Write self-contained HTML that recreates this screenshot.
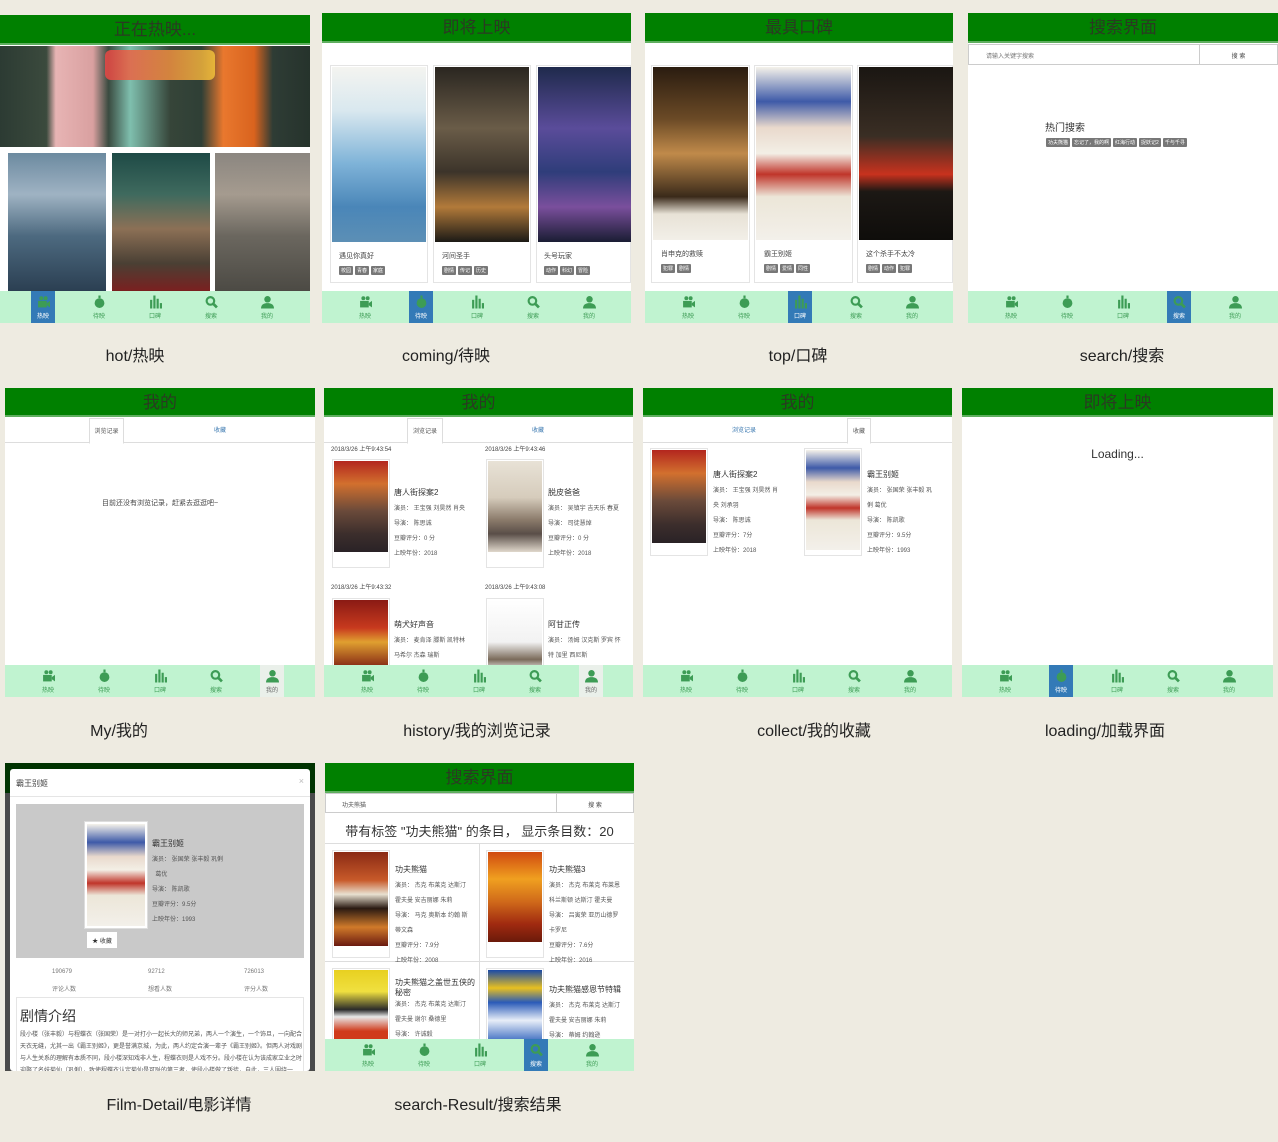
<!DOCTYPE html>
<html><head><meta charset="utf-8"><style>
*{margin:0;padding:0;box-sizing:border-box}
body{width:1278px;height:1142px;background:#eeebe1;position:relative;overflow:hidden;font-family:"Liberation Sans","Noto Sans CJK SC",sans-serif;color:#333}
.p{position:absolute;background:#fff;overflow:hidden}
.h{position:absolute;left:0;right:0;top:0;height:30px;background:#008000;border-bottom:2px solid #5fae5f;text-align:center;font-size:17px;line-height:29px;color:#2a3a22}
.nav{position:absolute;left:0;right:0;bottom:0;height:32px;background:#c0f3d0;display:flex;padding-left:15px}
.ni{width:56px;display:flex;justify-content:center}
.ni div{width:24px;height:32px;text-align:center;color:#3d9c55;font-size:6px;padding-top:4px}
.ni svg{width:13px;height:14px;display:block;margin:0 auto 2px;fill:currentColor}
.ni.a div{background:#337ab7}.ni.a span{color:#fff}
.ni.g div{background:#eaf0ea}
.ni span{color:#3d9c55}
.cap{position:absolute;font-size:16px;color:#222;transform:translateX(-50%);white-space:nowrap;line-height:20px}
.po{position:absolute}
.t{position:absolute;font-size:7px;color:#444;white-space:nowrap}
.tg{display:inline-block;background:#777;color:#fff;font-size:5px;padding:1px 2px;margin-right:2px;border-radius:1px}
.bx{position:absolute;border:1px solid #e4e4e4;background:#fff}
.tab{position:absolute;top:28px;left:0;right:0;height:27px;border-bottom:1px solid #ddd;font-size:6px}
.tab span{position:absolute;top:9px;color:#3a78b0}
.tab .on{position:absolute;top:2px;height:26px;border:1px solid #ddd;border-bottom:1px solid #fff;background:#fff;color:#555;padding-top:7px;text-align:center}
.inf{position:absolute;font-size:6px;color:#555;line-height:15px}
.inf b{display:block;font-weight:normal;font-size:8px;color:#333;line-height:18px}
</style></head><body>

<!-- ===== Row 1 ===== -->
<!-- hot -->
<div class="p" style="left:0;top:15px;width:310px;height:308px">
 <div class="h" style="height:30px">正在热映...</div>
 <div class="po" style="left:0;top:31px;width:310px;height:101px;background:linear-gradient(90deg,#2c3b33 0%,#3b4a3d 15%,#e7b4b4 18%,#d9a0a0 30%,#3a4b40 35%,#7fbfae 42%,#364539 55%,#2f3f36 65%,#e9782e 72%,#d9631e 82%,#2e3c35 88%,#26332c 100%)"></div>
 <div class="po" style="left:105px;top:35px;width:110px;height:30px;background:linear-gradient(90deg,#e94545,#f2c23a);border-radius:6px;opacity:.85"></div>
 <div class="po" style="left:8px;top:138px;width:98px;height:138px;background:linear-gradient(180deg,#6c8aa0,#9fb3c3 30%,#4d6a80 60%,#2b3f52)"></div>
 <div class="po" style="left:112px;top:138px;width:98px;height:138px;background:linear-gradient(180deg,#1e4a46,#3f6a5e 30%,#8c7056 55%,#4a4034 80%,#7a2020)"></div>
 <div class="po" style="left:215px;top:138px;width:95px;height:138px;background:linear-gradient(180deg,#8b8680,#a59b8f 30%,#6b675f 60%,#4c4a44)"></div>
 <div class="nav"><div class="ni a"><div><svg viewBox="0 0 12 12"><circle cx="4" cy="2.5" r="1.8"/><circle cx="8" cy="2.5" r="1.8"/><rect x="1" y="5" width="8" height="6"/><path d="M9 7l3-2v6l-3-2z"/></svg><span>热映</span></div></div><div class="ni"><div><svg viewBox="0 0 12 12"><circle cx="6" cy="7" r="4.5"/><rect x="5" y="0" width="2" height="2.5"/></svg><span>待映</span></div></div><div class="ni"><div><svg viewBox="0 0 12 12"><rect x="1" y="4" width="2" height="8"/><rect x="4" y="0" width="2" height="12"/><rect x="7" y="3" width="2" height="9"/><rect x="10" y="7" width="2" height="5"/></svg><span>口碑</span></div></div><div class="ni"><div><svg viewBox="0 0 12 12"><circle cx="5" cy="5" r="3.5" fill="none" stroke="currentColor" stroke-width="2"/><path d="M7.5 7.5l3.5 3.5" stroke="currentColor" stroke-width="2.5"/></svg><span>搜索</span></div></div><div class="ni"><div><svg viewBox="0 0 12 12"><circle cx="6" cy="3.5" r="3"/><path d="M0 12c0-4 3-5 6-5s6 1 6 5z"/></svg><span>我的</span></div></div></div>
</div>
<div class="cap" style="left:135px;top:347px">hot/热映</div>

<!-- coming -->
<div class="p" style="left:322px;top:13px;width:309px;height:310px">
 <div class="h">即将上映</div>
 <div class="bx" style="left:8px;top:52px;width:98px;height:218px"></div>
 <div class="bx" style="left:111px;top:52px;width:98px;height:218px"></div>
 <div class="bx" style="left:214px;top:52px;width:95px;height:218px"></div>
 <div class="po" style="left:10px;top:54px;width:94px;height:175px;background:linear-gradient(180deg,#f4f4f0,#d9e8ef 25%,#7fb3d8 55%,#4a86b8 80%,#5c8fb5)"></div>
 <div class="po" style="left:113px;top:54px;width:94px;height:175px;background:linear-gradient(180deg,#2a2620,#6a5c48 35%,#3c342a 60%,#b27a3a 80%,#1c1a16)"></div>
 <div class="po" style="left:216px;top:54px;width:93px;height:175px;background:linear-gradient(180deg,#1f2a4c,#5a4c9a 35%,#2f3d7a 60%,#7a4f9c 80%,#1a1d33)"></div>
 <div class="t" style="left:17px;top:238px">遇见你真好</div><div class="t" style="left:17px;top:253px"><span class="tg">校园</span><span class="tg">青春</span><span class="tg">家庭</span></div>
 <div class="t" style="left:120px;top:238px">河间圣手</div><div class="t" style="left:120px;top:253px"><span class="tg">剧情</span><span class="tg">传记</span><span class="tg">历史</span></div>
 <div class="t" style="left:222px;top:238px">头号玩家</div><div class="t" style="left:222px;top:253px"><span class="tg">动作</span><span class="tg">科幻</span><span class="tg">冒险</span></div>
 <div class="nav"><div class="ni"><div><svg viewBox="0 0 12 12"><circle cx="4" cy="2.5" r="1.8"/><circle cx="8" cy="2.5" r="1.8"/><rect x="1" y="5" width="8" height="6"/><path d="M9 7l3-2v6l-3-2z"/></svg><span>热映</span></div></div><div class="ni a"><div><svg viewBox="0 0 12 12"><circle cx="6" cy="7" r="4.5"/><rect x="5" y="0" width="2" height="2.5"/></svg><span>待映</span></div></div><div class="ni"><div><svg viewBox="0 0 12 12"><rect x="1" y="4" width="2" height="8"/><rect x="4" y="0" width="2" height="12"/><rect x="7" y="3" width="2" height="9"/><rect x="10" y="7" width="2" height="5"/></svg><span>口碑</span></div></div><div class="ni"><div><svg viewBox="0 0 12 12"><circle cx="5" cy="5" r="3.5" fill="none" stroke="currentColor" stroke-width="2"/><path d="M7.5 7.5l3.5 3.5" stroke="currentColor" stroke-width="2.5"/></svg><span>搜索</span></div></div><div class="ni"><div><svg viewBox="0 0 12 12"><circle cx="6" cy="3.5" r="3"/><path d="M0 12c0-4 3-5 6-5s6 1 6 5z"/></svg><span>我的</span></div></div></div>
</div>
<div class="cap" style="left:446px;top:347px">coming/待映</div>

<!-- top -->
<div class="p" style="left:645px;top:13px;width:308px;height:310px">
 <div class="h">最具口碑</div>
 <div class="bx" style="left:6px;top:52px;width:99px;height:218px"></div>
 <div class="bx" style="left:109px;top:52px;width:99px;height:218px"></div>
 <div class="bx" style="left:212px;top:52px;width:96px;height:218px"></div>
 <div class="po" style="left:8px;top:54px;width:95px;height:173px;background:linear-gradient(180deg,#2a1c10,#6b4a26 30%,#c08a4a 50%,#3a2a1a 75%,#e8e2d6 85%,#f2efe8)"></div>
 <div class="po" style="left:111px;top:54px;width:95px;height:173px;background:linear-gradient(180deg,#f5f2ea,#3e5aa8 20%,#e9d9cc 35%,#f3efe6 50%,#c0352a 62%,#ece6d8 75%,#f3f0ea)"></div>
 <div class="po" style="left:214px;top:54px;width:94px;height:173px;background:linear-gradient(180deg,#1a1612,#3a2e24 40%,#c8321e 62%,#1c1814 72%,#0f0d0b)"></div>
 <div class="t" style="left:16px;top:236px">肖申克的救赎</div><div class="t" style="left:16px;top:251px"><span class="tg">犯罪</span><span class="tg">剧情</span></div>
 <div class="t" style="left:119px;top:236px">霸王别姬</div><div class="t" style="left:119px;top:251px"><span class="tg">剧情</span><span class="tg">爱情</span><span class="tg">同性</span></div>
 <div class="t" style="left:221px;top:236px">这个杀手不太冷</div><div class="t" style="left:221px;top:251px"><span class="tg">剧情</span><span class="tg">动作</span><span class="tg">犯罪</span></div>
 <div class="nav"><div class="ni"><div><svg viewBox="0 0 12 12"><circle cx="4" cy="2.5" r="1.8"/><circle cx="8" cy="2.5" r="1.8"/><rect x="1" y="5" width="8" height="6"/><path d="M9 7l3-2v6l-3-2z"/></svg><span>热映</span></div></div><div class="ni"><div><svg viewBox="0 0 12 12"><circle cx="6" cy="7" r="4.5"/><rect x="5" y="0" width="2" height="2.5"/></svg><span>待映</span></div></div><div class="ni a"><div><svg viewBox="0 0 12 12"><rect x="1" y="4" width="2" height="8"/><rect x="4" y="0" width="2" height="12"/><rect x="7" y="3" width="2" height="9"/><rect x="10" y="7" width="2" height="5"/></svg><span>口碑</span></div></div><div class="ni"><div><svg viewBox="0 0 12 12"><circle cx="5" cy="5" r="3.5" fill="none" stroke="currentColor" stroke-width="2"/><path d="M7.5 7.5l3.5 3.5" stroke="currentColor" stroke-width="2.5"/></svg><span>搜索</span></div></div><div class="ni"><div><svg viewBox="0 0 12 12"><circle cx="6" cy="3.5" r="3"/><path d="M0 12c0-4 3-5 6-5s6 1 6 5z"/></svg><span>我的</span></div></div></div>
</div>
<div class="cap" style="left:798px;top:347px">top/口碑</div>

<!-- search -->
<div class="p" style="left:968px;top:13px;width:310px;height:310px">
 <div class="h">搜索界面</div>
 <div class="po" style="left:0;top:31px;width:232px;height:21px;border:1px solid #ccc;font-size:6px;color:#777;padding:6px 17px">请输入关键字搜索</div>
 <div class="po" style="left:231px;top:31px;width:79px;height:21px;border:1px solid #ccc;font-size:6px;color:#444;text-align:center;padding-top:6px">搜 索</div>
 <div class="t" style="left:77px;top:106px;font-size:10px;color:#333">热门搜索</div>
 <div class="t" style="left:78px;top:125px"><span class="tg">功夫熊猫</span><span class="tg">忘记了，我的啊</span><span class="tg">红海行动</span><span class="tg">捉妖记2</span><span class="tg">千与千寻</span></div>
 <div class="nav"><div class="ni"><div><svg viewBox="0 0 12 12"><circle cx="4" cy="2.5" r="1.8"/><circle cx="8" cy="2.5" r="1.8"/><rect x="1" y="5" width="8" height="6"/><path d="M9 7l3-2v6l-3-2z"/></svg><span>热映</span></div></div><div class="ni"><div><svg viewBox="0 0 12 12"><circle cx="6" cy="7" r="4.5"/><rect x="5" y="0" width="2" height="2.5"/></svg><span>待映</span></div></div><div class="ni"><div><svg viewBox="0 0 12 12"><rect x="1" y="4" width="2" height="8"/><rect x="4" y="0" width="2" height="12"/><rect x="7" y="3" width="2" height="9"/><rect x="10" y="7" width="2" height="5"/></svg><span>口碑</span></div></div><div class="ni a"><div><svg viewBox="0 0 12 12"><circle cx="5" cy="5" r="3.5" fill="none" stroke="currentColor" stroke-width="2"/><path d="M7.5 7.5l3.5 3.5" stroke="currentColor" stroke-width="2.5"/></svg><span>搜索</span></div></div><div class="ni"><div><svg viewBox="0 0 12 12"><circle cx="6" cy="3.5" r="3"/><path d="M0 12c0-4 3-5 6-5s6 1 6 5z"/></svg><span>我的</span></div></div></div>
</div>
<div class="cap" style="left:1122px;top:347px">search/搜索</div>

<!-- ===== Row 2 ===== -->
<!-- My -->
<div class="p" style="left:5px;top:388px;width:310px;height:309px">
 <div class="h" style="height:29px">我的</div>
 <div class="tab"><div class="on" style="left:84px;width:35px">浏览记录</div><span style="left:209px">收藏</span></div>
 <div class="t" style="left:0;right:0;top:110px;text-align:center;font-size:7px">目前还没有浏览记录，赶紧去逛逛吧~</div>
 <div class="nav"><div class="ni"><div><svg viewBox="0 0 12 12"><circle cx="4" cy="2.5" r="1.8"/><circle cx="8" cy="2.5" r="1.8"/><rect x="1" y="5" width="8" height="6"/><path d="M9 7l3-2v6l-3-2z"/></svg><span>热映</span></div></div><div class="ni"><div><svg viewBox="0 0 12 12"><circle cx="6" cy="7" r="4.5"/><rect x="5" y="0" width="2" height="2.5"/></svg><span>待映</span></div></div><div class="ni"><div><svg viewBox="0 0 12 12"><rect x="1" y="4" width="2" height="8"/><rect x="4" y="0" width="2" height="12"/><rect x="7" y="3" width="2" height="9"/><rect x="10" y="7" width="2" height="5"/></svg><span>口碑</span></div></div><div class="ni"><div><svg viewBox="0 0 12 12"><circle cx="5" cy="5" r="3.5" fill="none" stroke="currentColor" stroke-width="2"/><path d="M7.5 7.5l3.5 3.5" stroke="currentColor" stroke-width="2.5"/></svg><span>搜索</span></div></div><div class="ni g"><div><svg viewBox="0 0 12 12"><circle cx="6" cy="3.5" r="3"/><path d="M0 12c0-4 3-5 6-5s6 1 6 5z"/></svg><span style="color:#666">我的</span></div></div></div>
</div>
<div class="cap" style="left:119px;top:722px">My/我的</div>

<!-- history -->
<div class="p" style="left:324px;top:388px;width:309px;height:309px">
 <div class="h" style="height:29px">我的</div>
 <div class="tab"><div class="on" style="left:83px;width:36px">浏览记录</div><span style="left:208px">收藏</span></div>
 <div class="t" style="left:7px;top:56px;font-size:6px">2018/3/26 上午9:43:54</div>
 <div class="t" style="left:161px;top:56px;font-size:6px">2018/3/26 上午9:43:46</div>
 <div class="bx" style="left:8px;top:71px;width:58px;height:109px"></div>
 <div class="po" style="left:10px;top:73px;width:54px;height:91px;background:linear-gradient(180deg,#b3261e,#d2702e 25%,#6a4a3a 55%,#3c2e2c 80%,#2a2226)"></div>
 <div class="inf" style="left:70px;top:96px"><b>唐人街探案2</b>演员： 王宝强 刘昊然 肖央<br>导演： 陈思诚<br>豆瓣评分：0 分<br>上映年份：2018</div>
 <div class="bx" style="left:162px;top:71px;width:58px;height:109px"></div>
 <div class="po" style="left:164px;top:73px;width:54px;height:91px;background:linear-gradient(180deg,#e8e2d6,#d6ccbc 40%,#8a7a6a 65%,#5a4e48 80%,#e0d8cc)"></div>
 <div class="inf" style="left:224px;top:96px"><b>脱皮爸爸</b>演员： 吴镇宇 吉天乐 春夏<br>导演： 司徒慧焯<br>豆瓣评分：0 分<br>上映年份：2018</div>
 <div class="t" style="left:7px;top:194px;font-size:6px">2018/3/26 上午9:43:32</div>
 <div class="t" style="left:161px;top:194px;font-size:6px">2018/3/26 上午9:43:08</div>
 <div class="bx" style="left:8px;top:210px;width:58px;height:80px"></div>
 <div class="po" style="left:10px;top:212px;width:54px;height:70px;background:linear-gradient(180deg,#8a1a14,#c83a1e 40%,#e0a030 60%,#7a1a12)"></div>
 <div class="inf" style="left:70px;top:228px"><b>萌犬好声音</b>演员： 麦肯泽 滕斯 凯特林<br>马希尔 杰森 瑞斯<br>导演： 雷切尔 文斯</div>
 <div class="bx" style="left:162px;top:210px;width:58px;height:80px"></div>
 <div class="po" style="left:164px;top:212px;width:54px;height:70px;background:linear-gradient(180deg,#fff,#f2f2f2 60%,#7a6a5a 85%,#eee)"></div>
 <div class="inf" style="left:224px;top:228px"><b>阿甘正传</b>演员： 汤姆 汉克斯 罗宾 怀<br>特 加里 西尼斯<br>导演： 罗伯特 泽米吉斯</div>
 <div class="nav"><div class="ni"><div><svg viewBox="0 0 12 12"><circle cx="4" cy="2.5" r="1.8"/><circle cx="8" cy="2.5" r="1.8"/><rect x="1" y="5" width="8" height="6"/><path d="M9 7l3-2v6l-3-2z"/></svg><span>热映</span></div></div><div class="ni"><div><svg viewBox="0 0 12 12"><circle cx="6" cy="7" r="4.5"/><rect x="5" y="0" width="2" height="2.5"/></svg><span>待映</span></div></div><div class="ni"><div><svg viewBox="0 0 12 12"><rect x="1" y="4" width="2" height="8"/><rect x="4" y="0" width="2" height="12"/><rect x="7" y="3" width="2" height="9"/><rect x="10" y="7" width="2" height="5"/></svg><span>口碑</span></div></div><div class="ni"><div><svg viewBox="0 0 12 12"><circle cx="5" cy="5" r="3.5" fill="none" stroke="currentColor" stroke-width="2"/><path d="M7.5 7.5l3.5 3.5" stroke="currentColor" stroke-width="2.5"/></svg><span>搜索</span></div></div><div class="ni g"><div><svg viewBox="0 0 12 12"><circle cx="6" cy="3.5" r="3"/><path d="M0 12c0-4 3-5 6-5s6 1 6 5z"/></svg><span style="color:#666">我的</span></div></div></div>
</div>
<div class="cap" style="left:477px;top:722px">history/我的浏览记录</div>

<!-- collect -->
<div class="p" style="left:643px;top:388px;width:309px;height:309px">
 <div class="h" style="height:29px">我的</div>
 <div class="tab"><span style="left:89px">浏览记录</span><div class="on" style="left:204px;width:24px">收藏</div></div>
 <div class="bx" style="left:7px;top:60px;width:58px;height:108px"></div>
 <div class="po" style="left:9px;top:62px;width:54px;height:93px;background:linear-gradient(180deg,#b3261e,#d2702e 25%,#6a4a3a 55%,#3c2e2c 80%,#2a2226)"></div>
 <div class="inf" style="left:70px;top:78px"><b>唐人街探案2</b>演员： 王宝强 刘昊然 肖<br>央 刘承羽<br>导演： 陈思诚<br>豆瓣评分：7分<br>上映年份：2018</div>
 <div class="bx" style="left:161px;top:60px;width:58px;height:108px"></div>
 <div class="po" style="left:163px;top:62px;width:54px;height:100px;background:linear-gradient(180deg,#f5f2ea,#3e5aa8 18%,#e9d9cc 32%,#f3efe6 45%,#c0352a 58%,#ece6d8 70%,#f3f0ea)"></div>
 <div class="inf" style="left:224px;top:78px"><b>霸王别姬</b>演员： 张国荣 张丰毅 巩<br>俐 葛优<br>导演： 陈凯歌<br>豆瓣评分：9.5分<br>上映年份：1993</div>
 <div class="nav"><div class="ni"><div><svg viewBox="0 0 12 12"><circle cx="4" cy="2.5" r="1.8"/><circle cx="8" cy="2.5" r="1.8"/><rect x="1" y="5" width="8" height="6"/><path d="M9 7l3-2v6l-3-2z"/></svg><span>热映</span></div></div><div class="ni"><div><svg viewBox="0 0 12 12"><circle cx="6" cy="7" r="4.5"/><rect x="5" y="0" width="2" height="2.5"/></svg><span>待映</span></div></div><div class="ni"><div><svg viewBox="0 0 12 12"><rect x="1" y="4" width="2" height="8"/><rect x="4" y="0" width="2" height="12"/><rect x="7" y="3" width="2" height="9"/><rect x="10" y="7" width="2" height="5"/></svg><span>口碑</span></div></div><div class="ni"><div><svg viewBox="0 0 12 12"><circle cx="5" cy="5" r="3.5" fill="none" stroke="currentColor" stroke-width="2"/><path d="M7.5 7.5l3.5 3.5" stroke="currentColor" stroke-width="2.5"/></svg><span>搜索</span></div></div><div class="ni"><div><svg viewBox="0 0 12 12"><circle cx="6" cy="3.5" r="3"/><path d="M0 12c0-4 3-5 6-5s6 1 6 5z"/></svg><span>我的</span></div></div></div>
</div>
<div class="cap" style="left:814px;top:722px">collect/我的收藏</div>

<!-- loading -->
<div class="p" style="left:962px;top:388px;width:311px;height:309px">
 <div class="h" style="height:29px">即将上映</div>
 <div class="t" style="left:0;right:0;top:59px;text-align:center;font-size:12px;color:#333">Loading...</div>
 <div class="nav"><div class="ni"><div><svg viewBox="0 0 12 12"><circle cx="4" cy="2.5" r="1.8"/><circle cx="8" cy="2.5" r="1.8"/><rect x="1" y="5" width="8" height="6"/><path d="M9 7l3-2v6l-3-2z"/></svg><span>热映</span></div></div><div class="ni a"><div><svg viewBox="0 0 12 12"><circle cx="6" cy="7" r="4.5"/><rect x="5" y="0" width="2" height="2.5"/></svg><span>待映</span></div></div><div class="ni"><div><svg viewBox="0 0 12 12"><rect x="1" y="4" width="2" height="8"/><rect x="4" y="0" width="2" height="12"/><rect x="7" y="3" width="2" height="9"/><rect x="10" y="7" width="2" height="5"/></svg><span>口碑</span></div></div><div class="ni"><div><svg viewBox="0 0 12 12"><circle cx="5" cy="5" r="3.5" fill="none" stroke="currentColor" stroke-width="2"/><path d="M7.5 7.5l3.5 3.5" stroke="currentColor" stroke-width="2.5"/></svg><span>搜索</span></div></div><div class="ni"><div><svg viewBox="0 0 12 12"><circle cx="6" cy="3.5" r="3"/><path d="M0 12c0-4 3-5 6-5s6 1 6 5z"/></svg><span>我的</span></div></div></div>
</div>
<div class="cap" style="left:1105px;top:722px">loading/加载界面</div>

<!-- ===== Row 3 ===== -->
<!-- film detail -->
<div class="p" style="left:5px;top:763px;width:310px;height:308px;background:#4a4a4a">
 <div class="po" style="left:0;top:0;width:310px;height:30px;background:#003300"></div>
 <div class="po" style="left:5px;top:6px;width:300px;height:302px;background:#fff;border-radius:3px">
  <div class="t" style="left:6px;top:9px;font-size:8px">霸王别姬</div>
  <div class="t" style="right:6px;top:7px;font-size:9px;color:#bbb">×</div>
  <div class="po" style="left:0;right:0;top:27px;border-top:1px solid #e5e5e5"></div>
  <div class="po" style="left:6px;top:35px;width:288px;height:154px;background:#c9c9c9"></div>
  <div class="po" style="left:74px;top:52px;width:64px;height:108px;background:#fff;border:1px solid #ddd"></div>
  <div class="po" style="left:77px;top:55px;width:58px;height:102px;background:linear-gradient(180deg,#f5f2ea,#3e5aa8 18%,#e9d9cc 32%,#f3efe6 45%,#c0352a 58%,#ece6d8 70%,#f3f0ea)"></div>
  <div class="inf" style="left:142px;top:66px"><b>霸王别姬</b>演员： 张国荣 张丰毅 巩俐<br>&nbsp;&nbsp;葛优<br>导演： 陈凯歌<br>豆瓣评分：9.5分<br>上映年份：1993</div>
  <div class="po" style="left:77px;top:163px;width:30px;height:16px;background:#fff;font-size:6px;text-align:center;padding-top:4px">★ 收藏</div>
  <div class="t" style="left:42px;top:200px;font-size:6px;color:#777">190679</div>
  <div class="t" style="left:138px;top:200px;font-size:6px;color:#777">92712</div>
  <div class="t" style="left:234px;top:200px;font-size:6px;color:#777">726013</div>
  <div class="t" style="left:42px;top:215px;font-size:6px;color:#777">评论人数</div>
  <div class="t" style="left:138px;top:215px;font-size:6px;color:#777">想看人数</div>
  <div class="t" style="left:234px;top:215px;font-size:6px;color:#777">评分人数</div>
  <div class="po" style="left:6px;top:228px;width:288px;height:80px;border:1px solid #e5e5e5"></div>
  <div class="t" style="left:10px;top:237px;font-size:14px;color:#333">剧情介绍</div>
  <div class="po" style="left:10px;top:260px;width:282px;font-size:6px;line-height:12px;color:#555">段小楼（张丰毅）与程蝶衣（张国荣）是一对打小一起长大的师兄弟，两人一个演生，一个饰旦，一向配合天衣无缝，尤其一出《霸王别姬》，更是誉满京城，为此，两人约定合演一辈子《霸王别姬》。但两人对戏剧与人生关系的理解有本质不同，段小楼深知戏非人生，程蝶衣则是人戏不分。段小楼在认为该成家立业之时迎娶了名妓菊仙（巩俐），致使程蝶衣认定菊仙是可耻的第三者，使段小楼做了叛徒，自此，三人围绕一</div>
 </div>
</div>
<div class="cap" style="left:179px;top:1096px">Film-Detail/电影详情</div>

<!-- search result -->
<div class="p" style="left:325px;top:763px;width:309px;height:308px">
 <div class="h" style="height:30px">搜索界面</div>
 <div class="po" style="left:0;top:30px;width:232px;height:20px;border:1px solid #ccc;font-size:6px;color:#555;padding:6px 16px">功夫熊猫</div>
 <div class="po" style="left:231px;top:30px;width:78px;height:20px;border:1px solid #ccc;font-size:6px;color:#444;text-align:center;padding-top:6px">搜 索</div>
 <div class="t" style="left:0;right:0;top:58px;text-align:center;font-size:13px;color:#333">带有标签 "功夫熊猫" 的条目， 显示条目数：20</div>
 <div class="po" style="left:0;right:0;top:80px;height:1px;background:#ddd"></div>
 <div class="po" style="left:154px;top:80px;width:1px;height:200px;background:#ddd"></div>
 <div class="po" style="left:0;right:0;top:198px;height:1px;background:#ddd"></div>
 <div class="bx" style="left:7px;top:87px;width:58px;height:108px"></div>
 <div class="po" style="left:9px;top:89px;width:54px;height:94px;background:linear-gradient(180deg,#8a2a14,#c85a2a 30%,#e8e0d0 45%,#2a1a12 60%,#d07a2a 80%,#6a1a10)"></div>
 <div class="inf" style="left:70px;top:98px"><b>功夫熊猫</b>演员： 杰克 布莱克 达斯汀<br>霍夫曼 安吉丽娜 朱莉<br>导演： 马克 奥斯本 约翰 斯<br>蒂文森<br>豆瓣评分：7.9分<br>上映年份：2008</div>
 <div class="bx" style="left:161px;top:87px;width:58px;height:108px"></div>
 <div class="po" style="left:163px;top:89px;width:54px;height:90px;background:linear-gradient(180deg,#d04a10,#f0a020 30%,#d06a1a 55%,#a02a10 80%,#6a1a0a)"></div>
 <div class="inf" style="left:224px;top:98px"><b>功夫熊猫3</b>演员： 杰克 布莱克 布莱恩<br>科兰斯顿 达斯汀 霍夫曼<br>导演： 吕寅荣 亚历山德罗<br>卡罗尼<br>豆瓣评分：7.6分<br>上映年份：2016</div>
 <div class="bx" style="left:7px;top:205px;width:58px;height:80px"></div>
 <div class="po" style="left:9px;top:207px;width:54px;height:72px;background:linear-gradient(180deg,#e8d020,#f0e040 30%,#2a2a2a 55%,#e8e8e8 65%,#d03a1a 85%)"></div>
 <div class="inf" style="left:70px;top:215px"><b style="line-height:10px">功夫熊猫之盖世五侠的<br>秘密</b>演员： 杰克 布莱克 达斯汀<br>霍夫曼 谢尔 桑德里<br>导演： 许诚毅</div>
 <div class="bx" style="left:161px;top:205px;width:58px;height:80px"></div>
 <div class="po" style="left:163px;top:207px;width:54px;height:72px;background:linear-gradient(180deg,#1a4aa8,#e8c020 25%,#2a5ab8 45%,#e8eef8 70%,#3a6ac0)"></div>
 <div class="inf" style="left:224px;top:218px"><b>功夫熊猫感恩节特辑</b>演员： 杰克 布莱克 达斯汀<br>霍夫曼 安吉丽娜 朱莉<br>导演： 蒂姆 约翰逊</div>
 <div class="nav"><div class="ni"><div><svg viewBox="0 0 12 12"><circle cx="4" cy="2.5" r="1.8"/><circle cx="8" cy="2.5" r="1.8"/><rect x="1" y="5" width="8" height="6"/><path d="M9 7l3-2v6l-3-2z"/></svg><span>热映</span></div></div><div class="ni"><div><svg viewBox="0 0 12 12"><circle cx="6" cy="7" r="4.5"/><rect x="5" y="0" width="2" height="2.5"/></svg><span>待映</span></div></div><div class="ni"><div><svg viewBox="0 0 12 12"><rect x="1" y="4" width="2" height="8"/><rect x="4" y="0" width="2" height="12"/><rect x="7" y="3" width="2" height="9"/><rect x="10" y="7" width="2" height="5"/></svg><span>口碑</span></div></div><div class="ni a"><div><svg viewBox="0 0 12 12"><circle cx="5" cy="5" r="3.5" fill="none" stroke="currentColor" stroke-width="2"/><path d="M7.5 7.5l3.5 3.5" stroke="currentColor" stroke-width="2.5"/></svg><span>搜索</span></div></div><div class="ni"><div><svg viewBox="0 0 12 12"><circle cx="6" cy="3.5" r="3"/><path d="M0 12c0-4 3-5 6-5s6 1 6 5z"/></svg><span>我的</span></div></div></div>
</div>
<div class="cap" style="left:478px;top:1096px">search-Result/搜索结果</div>

</body></html>
